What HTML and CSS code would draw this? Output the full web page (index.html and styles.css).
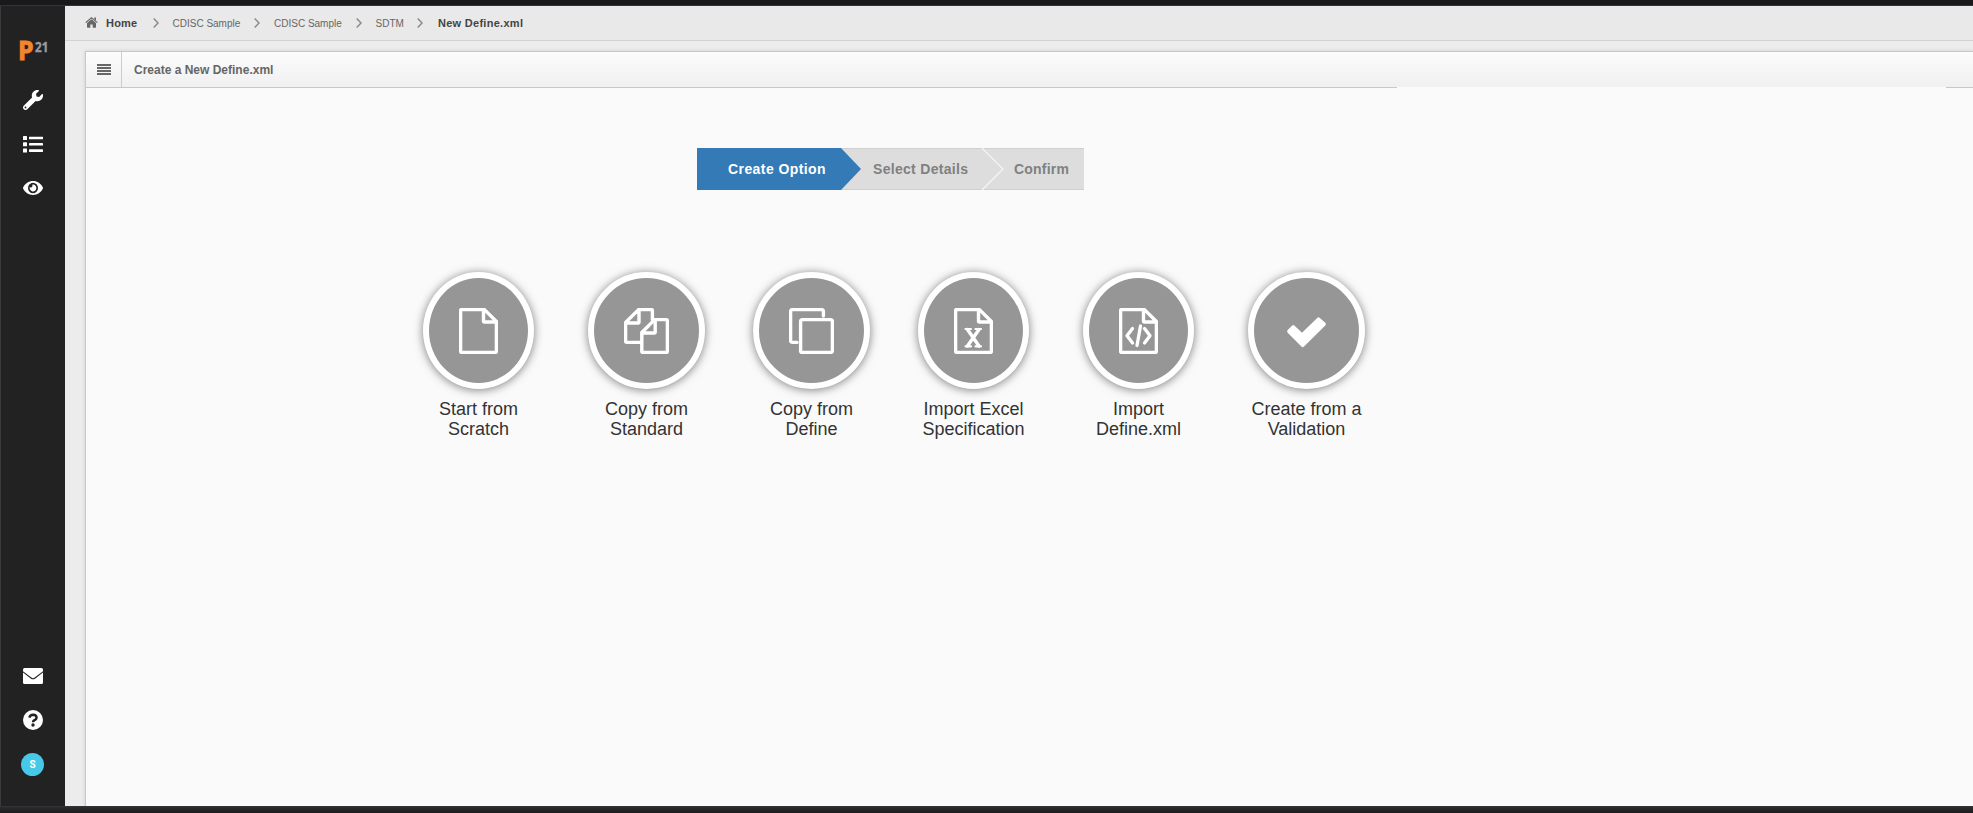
FILE: index.html
```html
<!DOCTYPE html>
<html lang="en">
<head>
<meta charset="utf-8">
<title>New Define.xml</title>
<link rel="stylesheet" href="styles.css">
</head>
<body>
<div class="topbar"></div>
<div class="app">
  <nav class="sidebar">
    <div class="logo"><span class="logo-p">P</span><span class="logo-n">21</span></div>
    <svg class="nav-icon wrench" width="20" height="20" viewBox="0 0 512 512"><path fill="#fff" d="M507.700 109.100c-2.200-9-13.500-12.100-20.100-5.500l-74.400 74.400-67.900-11.300L334 98.900l74.400-74.400c6.600-6.600 3.400-17.900-5.700-20.200-47.400-11.700-99.600.9-136.600 37.900-39.600 39.600-50.500 97.100-34.100 147.200L18.700 402.800c-25 25-25 65.500 0 90.500s65.500 25 90.500 0l213.200-213.200c50.100 16.700 107.500 5.700 147.400-34.200 37.100-37.100 49.700-89.300 37.900-136.800zM64 472c-13.200 0-24-10.800-24-24s10.700-24 24-24 24 10.700 24 24-10.800 24-24 24z"/></svg>
    <svg class="nav-icon list" width="20" height="17" viewBox="0 0 20 17" fill="#fff"><rect width="4" height="4" rx=".6"/><rect y="6.300" width="4" height="4" rx=".6"/><rect y="12.600" width="4" height="4" rx=".6"/><rect x="6" y=".7" width="14" height="2.600" rx=".4"/><rect x="6" y="7" width="14" height="2.600" rx=".4"/><rect x="6" y="13.300" width="14" height="2.600" rx=".4"/></svg>
    <svg class="nav-icon eye" width="20" height="14" viewBox="0 64 576 384" preserveAspectRatio="none"><path fill="#fff" d="M572.500 241.400C518.300 135.600 410.900 64 288 64S57.700 135.600 3.500 241.400a32.400 32.400 0 0 0 0 29.200C57.700 376.400 165.100 448 288 448s230.300-71.600 284.500-177.400a32.400 32.400 0 0 0 0-29.200zM288 400a144 144 0 1 1 144-144 143.900 143.900 0 0 1-144 144zm0-240a95.300 95.300 0 0 0-25.300 3.800 47.900 47.900 0 0 1-66.900 66.900A95.800 95.800 0 1 0 288 160z"/></svg>
    <div class="nav-bottom">
      <svg class="mail" width="20" height="16" viewBox="0 0 20 16"><rect width="20" height="16" rx="1.500" fill="#fff"/><path d="M-.5 3.500 8 10q2 1.600 4 0l8.500-6.500" fill="none" stroke="#222" stroke-width="1.100"/></svg>
      <svg class="help" width="20" height="20" viewBox="0 0 20 20"><circle cx="10" cy="10" r="10" fill="#fff"/><path d="M6.300 7.600Q7 4.700 10.200 4.700 13.600 4.900 13.600 7.600 13.500 9.200 11.500 10.200 10 10.900 10 12.300" fill="none" stroke="#222" stroke-width="2.400"/><circle cx="10" cy="15" r="1.700" fill="#222"/></svg>
      <div class="avatar">S</div>
    </div>
  </nav>
  <main class="main">
    <div class="crumbs">
      <svg class="home" width="13" height="11" viewBox="0 0 13 11" fill="#666"><path d="M6.500 2.300 11 6.100V10q0 .7-.7.7H7.700V7.500H5.300v3.200H2.700Q2 10.700 2 10V6.100z"/><path d="M.6 5.600 6.500.8l5.900 4.800" fill="none" stroke="#666" stroke-width="1.200"/><path d="M9.300.6H11v3L9.300 2.200z"/></svg>
      <b class="c-home">Home</b>
      <svg class="chev" width="6" height="10" viewBox="0 0 6 10"><path d="M.7.600 5 5 .7 9.400"/></svg>
      <span class="c-one">CDISC Sample</span>
      <svg class="chev" width="6" height="10" viewBox="0 0 6 10"><path d="M.7.600 5 5 .7 9.400"/></svg>
      <span class="c-two">CDISC Sample</span>
      <svg class="chev" width="6" height="10" viewBox="0 0 6 10"><path d="M.7.600 5 5 .7 9.400"/></svg>
      <span class="c-three">SDTM</span>
      <svg class="chev" width="6" height="10" viewBox="0 0 6 10"><path d="M.7.600 5 5 .7 9.400"/></svg>
      <b class="c-last">New Define.xml</b>
    </div>
    <section class="panel">
      <header class="panel-head">
        <div class="menu"><svg width="14" height="11" viewBox="0 0 14 11" fill="#666"><path d="M0 0h14v2H0zM0 3h14v2H0zM0 6h14v2H0zM0 9h14v2H0z"/></svg></div>
        <h1>Create a New Define.xml</h1>
      </header>
      <div class="rule"><i></i><i></i></div>
      <div class="steps">
        <svg class="steps-bg" width="387" height="42" viewBox="0 0 387 42"><path fill="#ddd" d="M0 0h387v42H0z"/><path stroke="#d0d0d0" d="M0 .5h387M0 41.500h387"/><path d="M285 0l21 21-21 21" fill="none" stroke="#f5f5f5" stroke-width="1.200"/><path fill="#337ab7" d="M0 0h144l20 21L144 42H0z"/></svg>
        <span class="step active">Create Option</span><span class="step second">Select Details</span><span class="step third">Confirm</span>
      </div>
      <div class="options">
        <div class="option narrow"><div class="disc"><svg width="39" height="46" viewBox="0 0 39 46"><path d="M2.600 1.600H25.500L37.400 13.500V43.400q0 1-1 1H2.600q-1 0-1-1V2.600q0-1 1-1zM24.500 2V13q0 1 1 1H37"/></svg></div><p>Start from<br>Scratch</p></div>
        <div class="option"><div class="disc"><svg width="45" height="46" viewBox="0 0 45 46"><path d="M17.500 34.400H2.600q-1 0-1-1V14.500L14.500 1.600H27.400q1 0 1 1V12M15 2V14q0 1-1 1H2M17.800 24.500 30.700 11.600H42.400q1 0 1 1V43.400q0 1-1 1H18.800q-1 0-1-1zM31.200 12V24q0 1-1 1H18"/></svg></div><p>Copy from<br>Standard</p></div>
        <div class="option"><div class="disc"><svg width="45" height="46" viewBox="0 0 45 46"><path d="M8 34.400H3.600q-2 0-2-2V3.600q0-2 2-2H32.400q2 0 2 2V8"/><rect x="11.600" y="11.600" width="31.800" height="32.800" rx="2"/></svg></div><p>Copy from<br>Define</p></div>
        <div class="option narrow"><div class="disc"><svg width="39" height="46" viewBox="0 0 39 46"><path d="M2.600 1.600H25.500L37.400 13.500V43.400q0 1-1 1H2.600q-1 0-1-1V2.600q0-1 1-1zM24.500 2V13q0 1 1 1H37"/><path stroke-width="3.400" d="M13.500 21.500 25 38M25 21.500 13.500 38"/><path stroke-width="2.200" d="M11.500 21h5.500M21.500 21H27M11.500 38.300h5.500M21.500 38.300H27"/></svg></div><p>Import Excel<br>Specification</p></div>
        <div class="option narrow"><div class="disc"><svg width="39" height="46" viewBox="0 0 39 46"><path d="M2.600 1.600H25.500L37.400 13.500V43.400q0 1-1 1H2.600q-1 0-1-1V2.600q0-1 1-1zM24.500 2V13q0 1 1 1H37"/><path stroke-width="3.300" d="M13.500 20.500 8 27.800l5.500 7.200M25.500 20.500 31 27.800 25.500 35M21.500 18 18 37.500"/></svg></div><p>Import<br>Define.xml</p></div>
        <div class="option"><div class="disc"><svg width="45" height="46" viewBox="0 0 45 46"><path fill="#fff" stroke="none" d="M3.700 22 8 17.700q1.300-1.300 2.600 0L18 24.800 33.200 9.900q1.300-1.300 2.600 0l5.500 4.900q1.300 1.300 0 2.600L20 38.500q-1.300 1.300-2.600 0L3.700 24.700q-1.300-1.400 0-2.700z"/></svg></div><p>Create from a<br>Validation</p></div>
      </div>
    </section>
  </main>
</div>
<div class="bottombar"></div>
</body>
</html>
```
FILE: styles.css
```css
* { box-sizing: border-box; }
body { margin: 0; width: 1973px; height: 813px; overflow: hidden; display: flex; flex-direction: column; background: #222; font-family: "Liberation Sans", Arial, sans-serif; }
.topbar { height: 6px; background: #19191b; border-bottom: 1px solid #363338; }
.bottombar { height: 7px; background: linear-gradient(#363638, #29292b 25%, #1d1d1e); }
.app { height: 800px; display: flex; }
.sidebar { width: 65px; flex: none; background: #222; border-left: 1px solid #3a3a3c; display: flex; flex-direction: column; align-items: center; }
.logo { display: flex; align-items: flex-start; height: 28px; width: 28px; margin-top: 30px; font-family: "Open Sans", sans-serif; font-weight: 700; }
.logo-p { color: #f0862d; font-size: 26px; line-height: 29px; -webkit-text-stroke: 1px #f0862d; transform: scaleX(.95); transform-origin: left; width: 15px; margin-left: -1px; margin-right: 2px; }
.logo-n { color: #9a9ba3; font-size: 15px; line-height: 20px; transform: scaleX(.78); transform-origin: left; width: 13px; -webkit-text-stroke: .4px #9a9ba3; }
.wrench { margin-top: 26px; }
.list { margin-top: 26px; }
.eye { margin-top: 28px; }
.nav-bottom { margin-top: auto; display: flex; flex-direction: column; align-items: center; padding-bottom: 30px; }
.help { margin-top: 26px; }
.avatar { width: 23px; height: 23px; margin-top: 23px; margin-right: 1px; border-radius: 50%; background: #46c8e8; color: #fff; font: 700 10px/23px Roboto, sans-serif; text-align: center; }
.main { flex: 1; min-width: 0; background: #ececec; }
.crumbs { height: 35px; background: #e9e9e9; border-bottom: 1px solid #d2d2d2; display: flex; align-items: center; padding: 0 0 0 20px; font-size: 10px; color: #666; white-space: nowrap; }
.crumbs b { color: #444; font-size: 11px; }
.home { flex: none; margin-top: -2px; }
.c-home { width: 33px; margin-left: 8px; letter-spacing: .2px; }
.chev { fill: none; stroke: #888; stroke-width: 1.4; margin: 0 14px 0 13.500px; flex: none; }
.c-one, .c-two { width: 68px; }
.c-three { width: 28px; }
.crumbs .c-last { margin-left: 1px; letter-spacing: .28px; }
.panel { height: 755px; margin: 10px 0 0 20px; background: #fafafa; border: 1px solid #c8c8c8; border-width: 1px 0 0 1px; box-shadow: 0 0 4px rgba(0,0,0,.12); }
.panel-head { height: 35px; display: flex; background: linear-gradient(#fcfcfc, #f0f0f0); }
.menu { width: 36px; border-right: 1px solid #ccc; display: flex; align-items: center; justify-content: center; }
.panel-head h1 { margin: 0 0 0 12px; font-size: 12px; line-height: 36px; color: #666; white-space: nowrap; }
.rule { height: 1px; display: flex; justify-content: space-between; }
.rule i { background: #c8c8c8; width: 1311px; }
.rule i + i { width: 27px; }
.steps { position: relative; width: 387px; height: 42px; margin: 60px 0 0 611px; display: flex; font-size: 14px; font-weight: 700; line-height: 42px; color: #808080; white-space: nowrap; letter-spacing: .3px; }
.steps-bg { position: absolute; inset: 0; }
.step { position: relative; }
.active { color: #fff; width: 145px; padding-left: 31px; letter-spacing: .42px; }
.second { width: 141px; padding-left: 31px; }
.third { padding-left: 31px; letter-spacing: .2px; }
.options { display: grid; grid-template-columns: repeat(6, 165px); margin: 82px 0 0 337px; }
.option { width: 117px; }
.option.narrow { width: 111px; }
.disc { height: 117px; border: 6px solid #fff; border-radius: 50%; background: #969696; box-shadow: 0 1px 10px rgba(0,0,0,.5); display: flex; align-items: center; justify-content: center; }
.disc svg { fill: none; stroke: #fff; stroke-width: 3.4; stroke-linejoin: round; stroke-linecap: round; }
.option p { margin: 10px -10px 0; font-size: 18px; line-height: 20px; color: #333; text-align: center; white-space: nowrap; }
```
